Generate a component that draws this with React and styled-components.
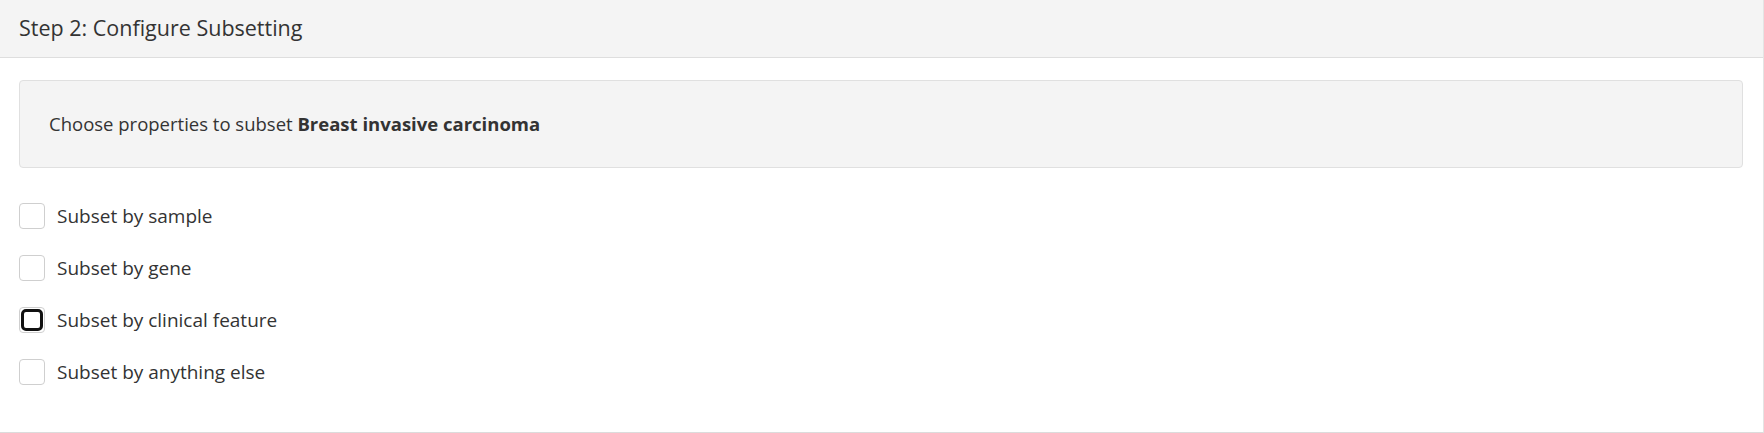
import React from "react";
import styled, { createGlobalStyle } from "styled-components";

const Global = createGlobalStyle`
  html, body { margin: 0; padding: 0; background: #fff; }
  body { font-family: "Open Sans", Lato, sans-serif; color: #333; }
  * { box-sizing: border-box; }
`;

const Card = styled.section`
  width: 1764px;
  height: 433px;
  border-bottom: 1px solid #dcdcdc;
  border-right: 1px solid #e4e4e4;
  display: flex;
  flex-direction: column;
`;

const Header = styled.header`
  height: 58px;
  background: #f4f4f4;
  border-bottom: 1px solid #dedede;
  display: flex;
  align-items: center;
  padding: 0 19px 2px;
  font-size: 21.5px;
  color: #333;
`;

const Body = styled.div`
  padding: 22px 20px 0 19px;
  display: flex;
  flex-direction: column;
`;

const InfoBox = styled.div`
  height: 88px;
  background: #f4f4f4;
  border: 1px solid #e0e0e0;
  border-radius: 4px;
  display: flex;
  align-items: center;
  padding: 0 29px 2px;
  font-size: 18.5px;
  color: #333;
  b { font-weight: 700; }
`;

const Options = styled.div`
  margin-top: 35px;
  display: flex;
  flex-direction: column;
  gap: 27px;
`;

const Option = styled.label`
  display: flex;
  align-items: center;
  gap: 12px;
  font-size: 19px;
  color: #333;
  height: 25px;
`;

const Box = styled.span`
  width: 26px;
  height: 26px;
  border: 1px solid #cfcfcf;
  border-radius: 4px;
  background: #fff;
  flex: none;
  position: relative;
  &::after {
    content: "";
    display: ${(p) => (p.$focused ? "block" : "none")};
    position: absolute;
    inset: 1px;
    border: 3px solid #111;
    border-radius: 5px;
  }
`;

const items = [
  "Subset by sample",
  "Subset by gene",
  "Subset by clinical feature",
  "Subset by anything else",
];

export default function App() {
  return (
    <>
      <Global />
      <Card>
        <Header>Step 2: Configure Subsetting</Header>
        <Body>
          <InfoBox>
            <span>
              Choose properties to subset <b>Breast invasive carcinoma</b>
            </span>
          </InfoBox>
          <Options>
            {items.map((t, i) => (
              <Option key={t}>
                <Box $focused={i === 2} />
                {t}
              </Option>
            ))}
          </Options>
        </Body>
      </Card>
    </>
  );
}
